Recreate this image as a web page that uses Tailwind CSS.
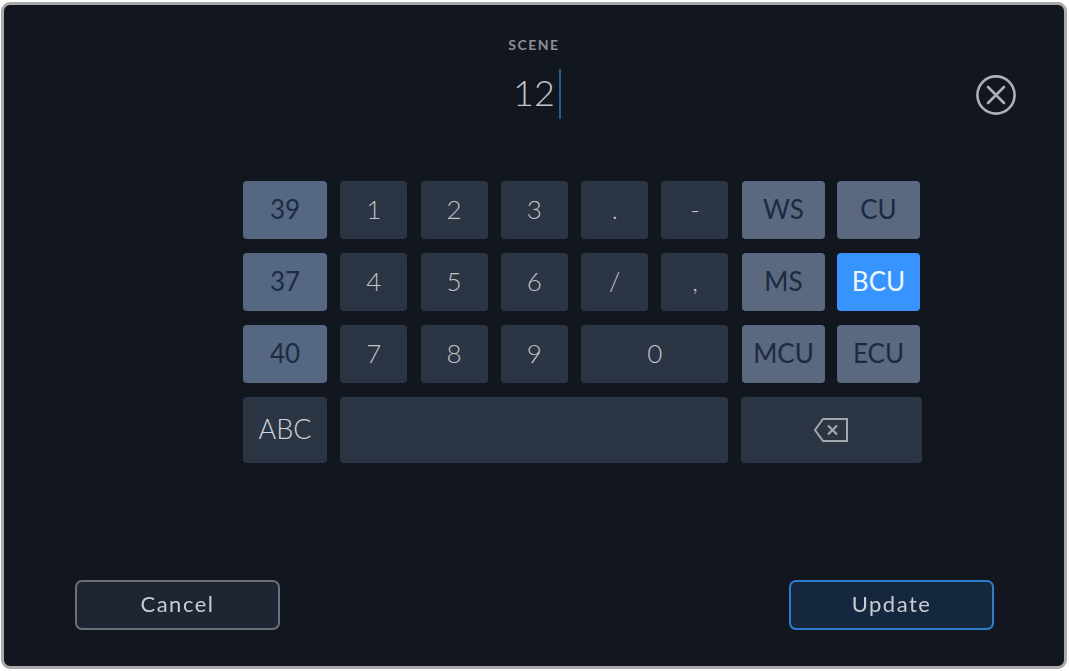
<!DOCTYPE html>
<html>
<head>
<meta charset="utf-8">
<script src="https://cdn.jsdelivr.net/npm/@tailwindcss/browser@4"></script>
</head>
<body class="bg-white">
<div class="w-[1069px] h-[671px] pt-[2px] pl-[1px] pr-[2px] pb-[2px] font-['Lato','Liberation_Sans',sans-serif] overflow-hidden blur-[0.5px]">
  <div class="relative w-[1066px] h-[667px] rounded-[9px] border-[3px] border-[#a9aaaa] bg-[#12171f] flex flex-col items-center">
    <div class="mt-[32px] text-[14px] leading-[16px] font-bold tracking-[1.5px] text-[#8b8e96]">SCENE</div>
    <div class="mt-[16px] flex items-center h-[50px] ml-[6px]">
      <span class="text-[36px] leading-[50px] pb-[5px] font-light text-[#c3c6cb]">12</span>
      <span class="ml-[4px] w-[2px] h-[50px] bg-[#1f5f9f]"></span>
    </div>
    <svg class="absolute left-[971px] top-[69px] w-[42px] h-[42px]" viewBox="0 0 42 42" fill="none" stroke="#aeb0b5" stroke-width="2.6" stroke-linecap="round">
      <circle cx="21" cy="21" r="18.6"/>
      <path d="M13 13 L29 29 M29 13 L13 29"/>
    </svg>

    <div class="mt-[62px] ml-[95px] flex gap-[13.5px] text-[26px] leading-none font-light">
      <div class="grid grid-cols-[84px_67px_67px_67px_67px_67px] grid-rows-[58px_58px_58px_66px] gap-x-[13.3px] gap-y-[14px]">
        <div class="rounded-[4px] pb-[2px] bg-[#566782] text-[#1c2b42] font-normal flex items-center justify-center">39</div>
        <div class="rounded-[4px] pb-[2px] bg-[#2c3543] text-[#c0c4ca] flex items-center justify-center">1</div>
        <div class="rounded-[4px] pb-[2px] bg-[#2c3543] text-[#c0c4ca] flex items-center justify-center">2</div>
        <div class="rounded-[4px] pb-[2px] bg-[#2c3543] text-[#c0c4ca] flex items-center justify-center">3</div>
        <div class="rounded-[4px] pb-[2px] bg-[#2c3543] text-[#c0c4ca] flex items-center justify-center">.</div>
        <div class="rounded-[4px] pb-[2px] bg-[#2c3543] text-[#c0c4ca] flex items-center justify-center">-</div>
        <div class="rounded-[4px] pb-[2px] bg-[#566782] text-[#1c2b42] font-normal flex items-center justify-center">37</div>
        <div class="rounded-[4px] pb-[2px] bg-[#2c3543] text-[#c0c4ca] flex items-center justify-center">4</div>
        <div class="rounded-[4px] pb-[2px] bg-[#2c3543] text-[#c0c4ca] flex items-center justify-center">5</div>
        <div class="rounded-[4px] pb-[2px] bg-[#2c3543] text-[#c0c4ca] flex items-center justify-center">6</div>
        <div class="rounded-[4px] pb-[2px] bg-[#2c3543] text-[#c0c4ca] flex items-center justify-center">/</div>
        <div class="rounded-[4px] pb-[2px] bg-[#2c3543] text-[#c0c4ca] flex items-center justify-center">,</div>
        <div class="rounded-[4px] pb-[2px] bg-[#566782] text-[#1c2b42] font-normal flex items-center justify-center">40</div>
        <div class="rounded-[4px] pb-[2px] bg-[#2c3543] text-[#c0c4ca] flex items-center justify-center">7</div>
        <div class="rounded-[4px] pb-[2px] bg-[#2c3543] text-[#c0c4ca] flex items-center justify-center">8</div>
        <div class="rounded-[4px] pb-[2px] bg-[#2c3543] text-[#c0c4ca] flex items-center justify-center">9</div>
        <div class="col-span-2 rounded-[4px] pb-[2px] bg-[#2c3543] text-[#c0c4ca] flex items-center justify-center">0</div>
        <div class="rounded-[4px] pb-[3px] bg-[#2c3543] text-[#d0d3d8] text-[27px] flex items-center justify-center">ABC</div>
        <div class="col-span-5 rounded-[4px] bg-[#2c3543]"></div>
      </div>
      <div class="grid grid-cols-[83px_83px] grid-rows-[58px_58px_58px_66px] gap-x-[12px] gap-y-[14px]">
        <div class="rounded-[4px] pb-[2px] bg-[#5a6880] text-[#1c2a40] font-normal flex items-center justify-center">WS</div>
        <div class="rounded-[4px] pb-[2px] bg-[#5a6880] text-[#1c2a40] font-normal flex items-center justify-center">CU</div>
        <div class="rounded-[4px] pb-[2px] bg-[#5a6880] text-[#1c2a40] font-normal flex items-center justify-center">MS</div>
        <div class="rounded-[4px] pb-[2px] bg-[#3794ff] text-[#eef5fc] font-normal flex items-center justify-center">BCU</div>
        <div class="rounded-[4px] pb-[2px] bg-[#5a6880] text-[#1c2a40] font-normal flex items-center justify-center">MCU</div>
        <div class="rounded-[4px] pb-[2px] bg-[#5a6880] text-[#1c2a40] font-normal flex items-center justify-center">ECU</div>
        <div class="col-span-2 -ml-[1px] -mr-[2px] rounded-[4px] bg-[#2c3543] flex items-center justify-center">
          <svg class="w-[36px] h-[26px]" viewBox="0 0 36 26" fill="none" stroke="#a3a7ae" stroke-width="2">
            <path d="M10 2 H34 V24 H10 L2 13 Z"/>
            <path d="M15 8.5 L24 17.5 M24 8.5 L15 17.5" stroke-width="2.2"/>
          </svg>
        </div>
      </div>
    </div>

    <div class="mt-auto mb-[36px] w-full pl-[71px] pr-[70px] flex justify-between text-[22px] leading-none tracking-[1.5px] text-[#c9ccd1]">
      <div class="w-[205px] h-[50px] rounded-[7px] border-[2px] border-[#6d7078] bg-[#1e2633] pb-[2px] flex items-center justify-center">Cancel</div>
      <div class="w-[205px] h-[50px] rounded-[7px] border-[2px] border-[#2f7ccc] bg-[#15263f] pb-[2px] flex items-center justify-center">Update</div>
    </div>
  </div>
</div>
</body>
</html>
